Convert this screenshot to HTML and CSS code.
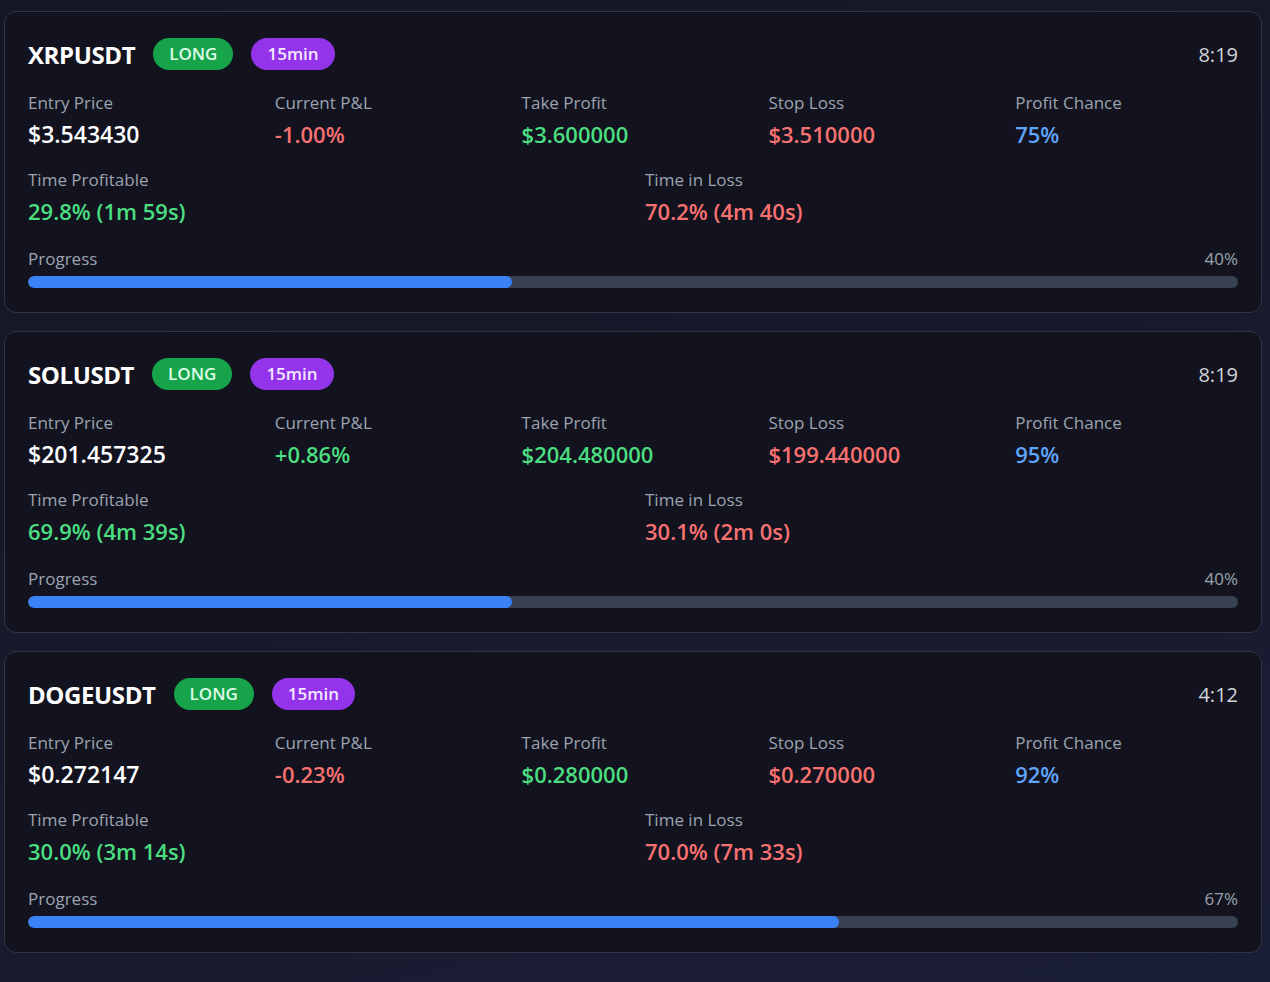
FILE: index.html
```html
<!DOCTYPE html>
<html>
<head>
<meta charset="utf-8">
<link rel="stylesheet" href="styles.css">
</head>
<body>
<div class="list">
  <div class="card">
    <div class="head">
      <div class="left">
        <span class="sym">XRPUSDT</span>
        <span class="badge long">LONG</span>
        <span class="badge tf">15min</span>
      </div>
      <span class="timer">8:19</span>
    </div>
    <div class="grid5">
      <div><div class="lbl">Entry Price</div><div class="val white">$3.543430</div></div>
      <div><div class="lbl">Current P&amp;L</div><div class="val red">-1.00%</div></div>
      <div><div class="lbl">Take Profit</div><div class="val green">$3.600000</div></div>
      <div><div class="lbl">Stop Loss</div><div class="val red">$3.510000</div></div>
      <div><div class="lbl">Profit Chance</div><div class="val blue">75%</div></div>
    </div>
    <div class="grid2">
      <div><div class="lbl">Time Profitable</div><div class="val green">29.8% (1m 59s)</div></div>
      <div><div class="lbl">Time in Loss</div><div class="val red">70.2% (4m 40s)</div></div>
    </div>
    <div class="prog">
      <div class="prow"><span>Progress</span><span>40%</span></div>
      <div class="track"><div class="fill" style="width:40%"></div></div>
    </div>
  </div>

  <div class="card">
    <div class="head">
      <div class="left">
        <span class="sym">SOLUSDT</span>
        <span class="badge long">LONG</span>
        <span class="badge tf">15min</span>
      </div>
      <span class="timer">8:19</span>
    </div>
    <div class="grid5">
      <div><div class="lbl">Entry Price</div><div class="val white">$201.457325</div></div>
      <div><div class="lbl">Current P&amp;L</div><div class="val green">+0.86%</div></div>
      <div><div class="lbl">Take Profit</div><div class="val green">$204.480000</div></div>
      <div><div class="lbl">Stop Loss</div><div class="val red">$199.440000</div></div>
      <div><div class="lbl">Profit Chance</div><div class="val blue">95%</div></div>
    </div>
    <div class="grid2">
      <div><div class="lbl">Time Profitable</div><div class="val green">69.9% (4m 39s)</div></div>
      <div><div class="lbl">Time in Loss</div><div class="val red">30.1% (2m 0s)</div></div>
    </div>
    <div class="prog">
      <div class="prow"><span>Progress</span><span>40%</span></div>
      <div class="track"><div class="fill" style="width:40%"></div></div>
    </div>
  </div>

  <div class="card">
    <div class="head">
      <div class="left">
        <span class="sym">DOGEUSDT</span>
        <span class="badge long">LONG</span>
        <span class="badge tf">15min</span>
      </div>
      <span class="timer">4:12</span>
    </div>
    <div class="grid5">
      <div><div class="lbl">Entry Price</div><div class="val white">$0.272147</div></div>
      <div><div class="lbl">Current P&amp;L</div><div class="val red">-0.23%</div></div>
      <div><div class="lbl">Take Profit</div><div class="val green">$0.280000</div></div>
      <div><div class="lbl">Stop Loss</div><div class="val red">$0.270000</div></div>
      <div><div class="lbl">Profit Chance</div><div class="val blue">92%</div></div>
    </div>
    <div class="grid2">
      <div><div class="lbl">Time Profitable</div><div class="val green">30.0% (3m 14s)</div></div>
      <div><div class="lbl">Time in Loss</div><div class="val red">70.0% (7m 33s)</div></div>
    </div>
    <div class="prog">
      <div class="prow"><span>Progress</span><span>67%</span></div>
      <div class="track"><div class="fill" style="width:67%"></div></div>
    </div>
  </div>
</div>
</body>
</html>
```

FILE: styles.css
```css
* { box-sizing: border-box; }
html, body { margin: 0; height: 100%; }
body {
  background: linear-gradient(160deg, #151623 0%, #181a2c 50%, #1a1e36 100%);
  font-family: "Open Sans", "Noto Sans", sans-serif;
  color: #f3f4f6;
}
.list {
  padding: 11px 8px 0 4px;
  display: flex;
  flex-direction: column;
  gap: 18px;
}
.card {
  background: #12131f;
  border: 1px solid #2f3545;
  border-radius: 12px;
  padding: 24px 23px 24px 23px;
}
.head {
  height: 36px;
  display: flex;
  align-items: center;
  justify-content: space-between;
}
.left { display: flex; align-items: center; gap: 18px; }
.sym { font-size: 24px; font-weight: 700; color: #ffffff; letter-spacing: -0.4px; }
.badge {
  height: 32px;
  line-height: 32px;
  padding: 0 16px;
  border-radius: 16px;
  font-size: 17px;
  font-weight: 600;
}
.long { background: #16a34a; color: #dcfce7; }
.tf { background: #9333ea; color: #f3e8ff; }
.timer { font-size: 20px; color: #d1d5db; }
.grid5 {
  margin-top: 19px;
  display: grid;
  grid-template-columns: repeat(5, 1fr);
  column-gap: 24px;
}
.grid2 {
  margin-top: 20px;
  display: grid;
  grid-template-columns: 1fr 1fr;
  column-gap: 24px;
}
.lbl { font-size: 17px; line-height: 24px; color: #9ca3af; }
.val { font-size: 22px; line-height: 28px; font-weight: 600; margin-top: 5px; }
.white { color: #ffffff; font-size: 23px; }
.green { color: #4ade80; }
.red { color: #f87171; }
.blue { color: #60a5fa; }
.prog { margin-top: 22px; }
.prow {
  display: flex;
  justify-content: space-between;
  font-size: 17px;
  line-height: 24px;
  color: #9ca3af;
}
.track {
  margin-top: 5px;
  height: 12px;
  border-radius: 6px;
  background: #374151;
  overflow: hidden;
}
.fill { height: 100%; background: #3b82f6; border-radius: 6px; }
```
